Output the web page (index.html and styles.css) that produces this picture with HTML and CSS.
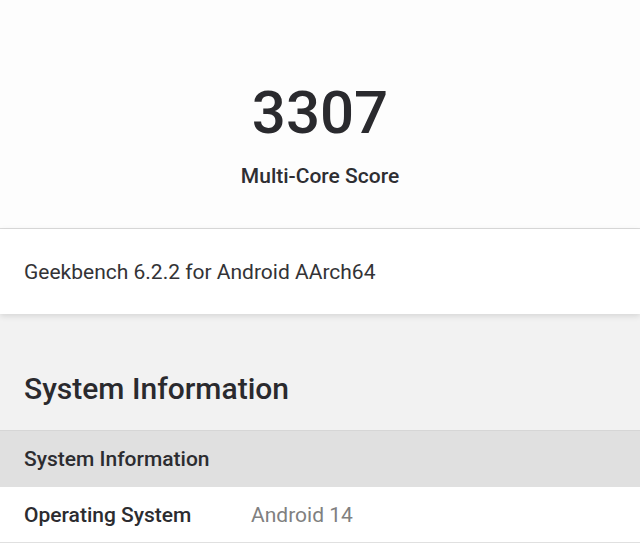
FILE: index.html
```html
<!DOCTYPE html>
<html>
<head>
<meta charset="utf-8">
<link rel="stylesheet" href="styles.css">
</head>
<body>
<section class="score">
  <div class="score-value">3307</div>
  <div class="score-label">Multi-Core Score</div>
</section>
<section class="version">Geekbench 6.2.2 for Android AArch64</section>
<section class="sysinfo">
  <h2 class="section-title">System Information</h2>
  <div class="table">
    <div class="table-head">System Information</div>
    <div class="table-row">
      <span class="row-name">Operating System</span>
      <span class="row-value">Android 14</span>
    </div>
  </div>
</section>
</body>
</html>
```
FILE: styles.css
```css
* { box-sizing: border-box; }
html, body { margin: 0; padding: 0; }
body {
  font-family: Roboto, "Liberation Sans", sans-serif;
  background: #ffffff;
  color: #2c2c30;
  width: 640px;
  height: 560px;
  overflow: hidden;
}
.score {
  background: #fdfdfd;
  text-align: center;
  padding: 78px 0 40px;
  border-bottom: 1px solid #dcdcdc;
}
.score-value {
  font-size: 60px;
  font-weight: 500;
  line-height: 70px;
  color: #2a2a2e;
}
.score-label {
  margin-top: 16px;
  font-size: 21px;
  font-weight: 500;
  line-height: 24px;
  color: #2e2e32;
}
.version {
  position: relative;
  z-index: 1;
  height: 85px;
  display: flex;
  align-items: center;
  padding: 0 24px;
  font-size: 21px;
  color: #333336;
  background: #ffffff;
  box-shadow: 0 2px 6px rgba(0, 0, 0, 0.12);
}
.sysinfo {
  background: #f2f2f2;
}
.section-title {
  margin: 0;
  padding: 57px 24px 23px;
  font-size: 30px;
  font-weight: 500;
  line-height: 36px;
  color: #2a2a2e;
  border-bottom: 1px solid #d6d6d6;
}
.table-head {
  height: 56px;
  display: flex;
  align-items: center;
  padding: 0 24px;
  background: #e0e0e0;
  font-size: 21px;
  font-weight: 500;
  color: #2c2c30;
}
.table-row {
  height: 56px;
  display: flex;
  align-items: center;
  padding: 0 24px;
  background: #ffffff;
  border-bottom: 1px solid #e0e0e0;
  font-size: 21px;
}
.row-name {
  width: 227px;
  font-weight: 500;
  color: #2c2c30;
}
.row-value {
  color: #808080;
}
```
